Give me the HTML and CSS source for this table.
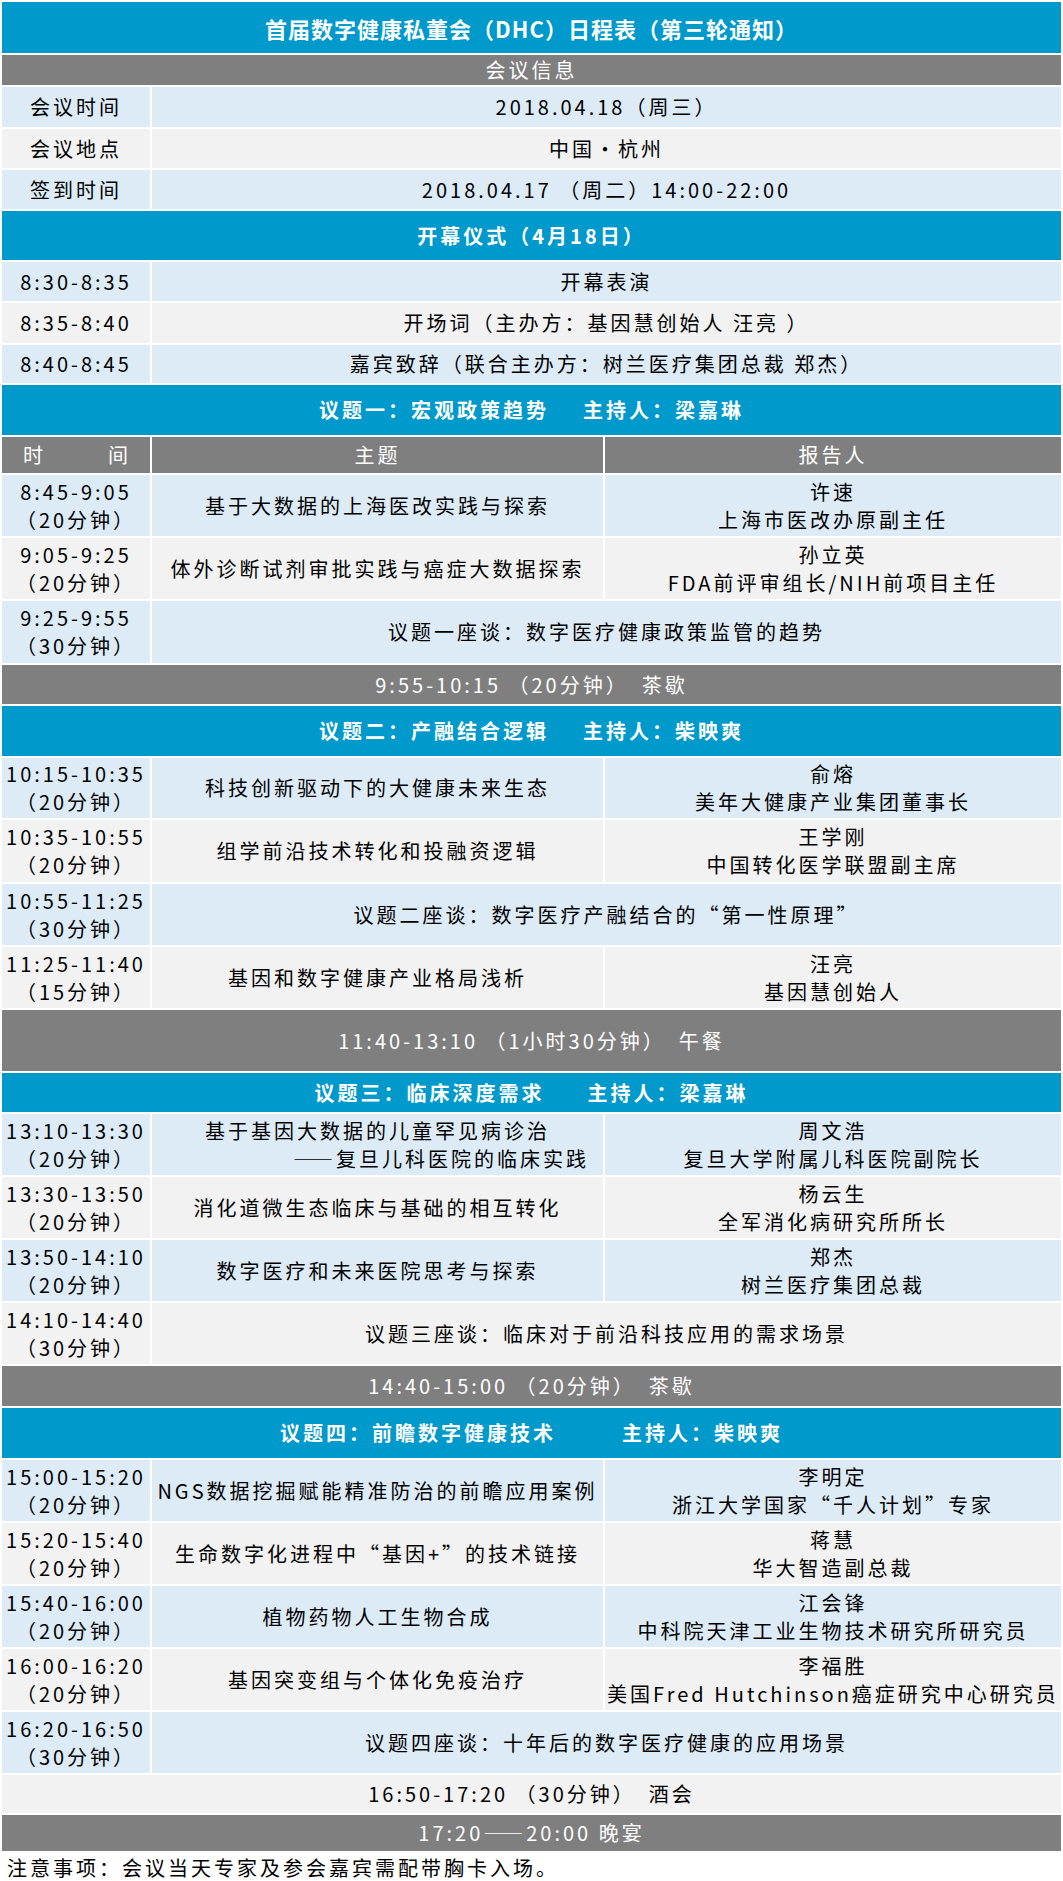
FILE: index.html
```html
<!DOCTYPE html>
<html lang="zh-CN">
<head>
<meta charset="utf-8">
<title>首届数字健康私董会（DHC）日程表</title>
<link rel="stylesheet" href="styles.css">
</head>
<body>
<table class="schedule">
  <colgroup>
    <col class="col-time">
    <col class="col-topic">
    <col class="col-speaker">
  </colgroup>
  <tbody>
    <tr><td colspan="3" class="bar title h51">首届数字健康私董会（DHC）日程表（第三轮通知）</td></tr>
    <tr><td colspan="3" class="band h30">会议信息</td></tr>
    <tr class="blue"><td class="h40">会议时间</td><td colspan="2">2018.04.18（周三）</td></tr>
    <tr class="grey"><td class="h39">会议地点</td><td colspan="2">中国•杭州</td></tr>
    <tr class="blue"><td class="h39">签到时间</td><td colspan="2">2018.04.17 （周二）14:00-22:00</td></tr>
    <tr><td colspan="3" class="bar h49">开幕仪式（4月18日）</td></tr>
    <tr class="blue"><td class="h39">8:30-8:35</td><td colspan="2">开幕表演</td></tr>
    <tr class="grey"><td class="h40">8:35-8:40</td><td colspan="2">开场词（主办方：基因慧创始人 汪亮 ）</td></tr>
    <tr class="blue"><td class="h38">8:40-8:45</td><td colspan="2">嘉宾致辞（联合主办方：树兰医疗集团总裁 郑杰）</td></tr>
    <tr><td colspan="3" class="bar h50">议题一：宏观政策趋势<span class="host gap-s">主持人：梁嘉琳</span></td></tr>
    <tr class="band">
      <td class="h36"><div class="split"><span>时</span><span>间</span></div></td>
      <td>主题</td>
      <td>报告人</td>
    </tr>
    <tr class="blue"><td class="h61">8:45-9:05<br>（20分钟）</td><td>基于大数据的上海医改实践与探索</td><td>许速<br>上海市医改办原副主任</td></tr>
    <tr class="grey"><td class="h61">9:05-9:25<br>（20分钟）</td><td>体外诊断试剂审批实践与癌症大数据探索</td><td>孙立英<br>FDA前评审组长/NIH前项目主任</td></tr>
    <tr class="blue"><td class="h62">9:25-9:55<br>（30分钟）</td><td colspan="2">议题一座谈：数字医疗健康政策监管的趋势</td></tr>
    <tr><td colspan="3" class="band h39">9:55-10:15 （20分钟）　茶歇</td></tr>
    <tr><td colspan="3" class="bar h50">议题二：产融结合逻辑<span class="host gap-s">主持人：柴映爽</span></td></tr>
    <tr class="blue"><td class="h60">10:15-10:35<br>（20分钟）</td><td>科技创新驱动下的大健康未来生态</td><td>俞熔<br>美年大健康产业集团董事长</td></tr>
    <tr class="grey"><td class="h62">10:35-10:55<br>（20分钟）</td><td>组学前沿技术转化和投融资逻辑</td><td>王学刚<br>中国转化医学联盟副主席</td></tr>
    <tr class="blue"><td class="h61">10:55-11:25<br>（30分钟）</td><td colspan="2">议题二座谈：数字医疗产融结合的“第一性原理”</td></tr>
    <tr class="grey"><td class="h61">11:25-11:40<br>（15分钟）</td><td>基因和数字健康产业格局浅析</td><td>汪亮<br>基因慧创始人</td></tr>
    <tr><td colspan="3" class="band h61">11:40-13:10 （1小时30分钟）　午餐</td></tr>
    <tr><td colspan="3" class="bar h39">议题三：临床深度需求<span class="host gap-m">主持人：梁嘉琳</span></td></tr>
    <tr class="blue"><td class="h61">13:10-13:30<br>（20分钟）</td><td><div>基于基因大数据的儿童罕见病诊治</div><div class="sub">——复旦儿科医院的临床实践</div></td><td>周文浩<br>复旦大学附属儿科医院副院长</td></tr>
    <tr class="grey"><td class="h61">13:30-13:50<br>（20分钟）</td><td>消化道微生态临床与基础的相互转化</td><td>杨云生<br>全军消化病研究所所长</td></tr>
    <tr class="blue"><td class="h61">13:50-14:10<br>（20分钟）</td><td>数字医疗和未来医院思考与探索</td><td>郑杰<br>树兰医疗集团总裁</td></tr>
    <tr class="grey"><td class="h61">14:10-14:40<br>（30分钟）</td><td colspan="2">议题三座谈：临床对于前沿科技应用的需求场景</td></tr>
    <tr><td colspan="3" class="band h40">14:40-15:00 （20分钟）　茶歇</td></tr>
    <tr><td colspan="3" class="bar h50">议题四：前瞻数字健康技术<span class="host gap-l">主持人：柴映爽</span></td></tr>
    <tr class="blue"><td class="h61">15:00-15:20<br>（20分钟）</td><td>NGS数据挖掘赋能精准防治的前瞻应用案例</td><td>李明定<br>浙江大学国家“千人计划”专家</td></tr>
    <tr class="grey"><td class="h61">15:20-15:40<br>（20分钟）</td><td>生命数字化进程中“基因+”的技术链接</td><td>蒋慧<br>华大智造副总裁</td></tr>
    <tr class="blue"><td class="h61">15:40-16:00<br>（20分钟）</td><td>植物药物人工生物合成</td><td>江会锋<br>中科院天津工业生物技术研究所研究员</td></tr>
    <tr class="grey"><td class="h61">16:00-16:20<br>（20分钟）</td><td>基因突变组与个体化免疫治疗</td><td>李福胜<br>美国Fred Hutchinson癌症研究中心研究员</td></tr>
    <tr class="blue"><td class="h61">16:20-16:50<br>（30分钟）</td><td colspan="2">议题四座谈：十年后的数字医疗健康的应用场景</td></tr>
    <tr class="grey"><td colspan="3" class="h38">16:50-17:20 （30分钟）　酒会</td></tr>
    <tr><td colspan="3" class="band h36">17:20——20:00 晚宴</td></tr>
  </tbody>
</table>
<p class="note">注意事项：会议当天专家及参会嘉宾需配带胸卡入场。</p>
</body>
</html>
```

FILE: styles.css
```css
* {
  box-sizing: border-box;
}

html,
body {
  margin: 0;
  padding: 0;
  background: #ffffff;
}

body {
  width: 1063px;
  font-family: "Liberation Sans Narrow", "Noto Sans CJK SC", sans-serif;
  font-size: 20px;
  letter-spacing: 3px;
  color: #000000;
}

.schedule {
  width: 1063px;
  border-collapse: separate;
  border-spacing: 2px;
  table-layout: fixed;
}

.col-time {
  width: 148px;
}

.col-topic {
  width: 451px;
}

.col-speaker {
  width: 456px;
}

.schedule td {
  padding: 0;
  text-align: center;
  vertical-align: middle;
  white-space: nowrap;
  line-height: 28px;
}

.blue td {
  background: #ddebf7;
}

.grey td {
  background: #f2f2f2;
}

.bar {
  background: #0099cc;
  color: #ffffff;
  font-weight: bold;
}

.title {
  font-size: 22px;
  letter-spacing: 1px;
}

.band,
.band td {
  background: #7f7f7f;
  color: #ffffff;
}

.split {
  display: flex;
  justify-content: space-between;
  padding: 0 19px 0 21px;
}

.sub {
  text-align: right;
  padding-right: 14px;
}

.host {
  display: inline-block;
}

.gap-s {
  margin-left: 34px;
}

.gap-m {
  margin-left: 43px;
}

.gap-l {
  margin-left: 66px;
}

.h30 { height: 30px; }
.h36 { height: 36px; }
.h38 { height: 38px; }
.h39 { height: 39px; }
.h40 { height: 40px; }
.h49 { height: 49px; }
.h50 { height: 50px; }
.h51 { height: 51px; }
.h60 { height: 60px; }
.h61 { height: 61px; }
.h62 { height: 62px; }

.note {
  margin: 0;
  padding-left: 7px;
  height: 29px;
  line-height: 29px;
  white-space: nowrap;
}
```
